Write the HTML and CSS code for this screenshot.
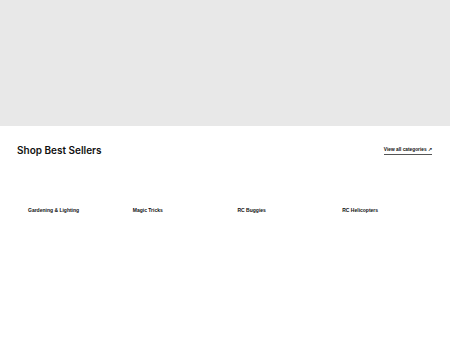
FILE: index.html
```html
<!DOCTYPE html>
<html>
<head>
<meta charset="utf-8">
<link rel="stylesheet" href="styles.css">
</head>
<body>
<div class="hero"></div>
<section class="best">
  <div class="head">
    <h2 class="title">Shop Best Sellers</h2>
    <a class="all" href="#">View all categories <span class="arr">↗</span></a>
  </div>
  <div class="grid">
    <div class="card"><span class="label">Gardening &amp; Lighting</span></div>
    <div class="card"><span class="label">Magic Tricks</span></div>
    <div class="card"><span class="label">RC Buggies</span></div>
    <div class="card"><span class="label">RC Helicopters</span></div>
  </div>
</section>
</body>
</html>
```
FILE: styles.css
```css
html, body { margin: 0; padding: 0; background: #fff; }
body { font-family: "Liberation Sans", Arial, sans-serif; color: #111; }
.hero { height: 126px; background: #e8e8e8; }
.best { padding: 0 17px; }
.head { display: flex; justify-content: space-between; align-items: center; height: 47px; }
.title { margin: 0; font-size: 10px; font-weight: 600; font-family: Inter, sans-serif; }
.all { font-size: 4.8px; color: #111; text-decoration: none; border-bottom: 1px solid #555; padding-bottom: 2px; font-weight: 700; margin-top: 3px; margin-right: 1px; }
.arr { font-size: 4.8px; }
.grid { display: grid; grid-template-columns: repeat(4, 1fr); column-gap: 3px; padding-top: 26px; }
.card { padding-left: 11px; line-height: 1; }
.label { font-size: 5px; font-weight: 700; }
```
